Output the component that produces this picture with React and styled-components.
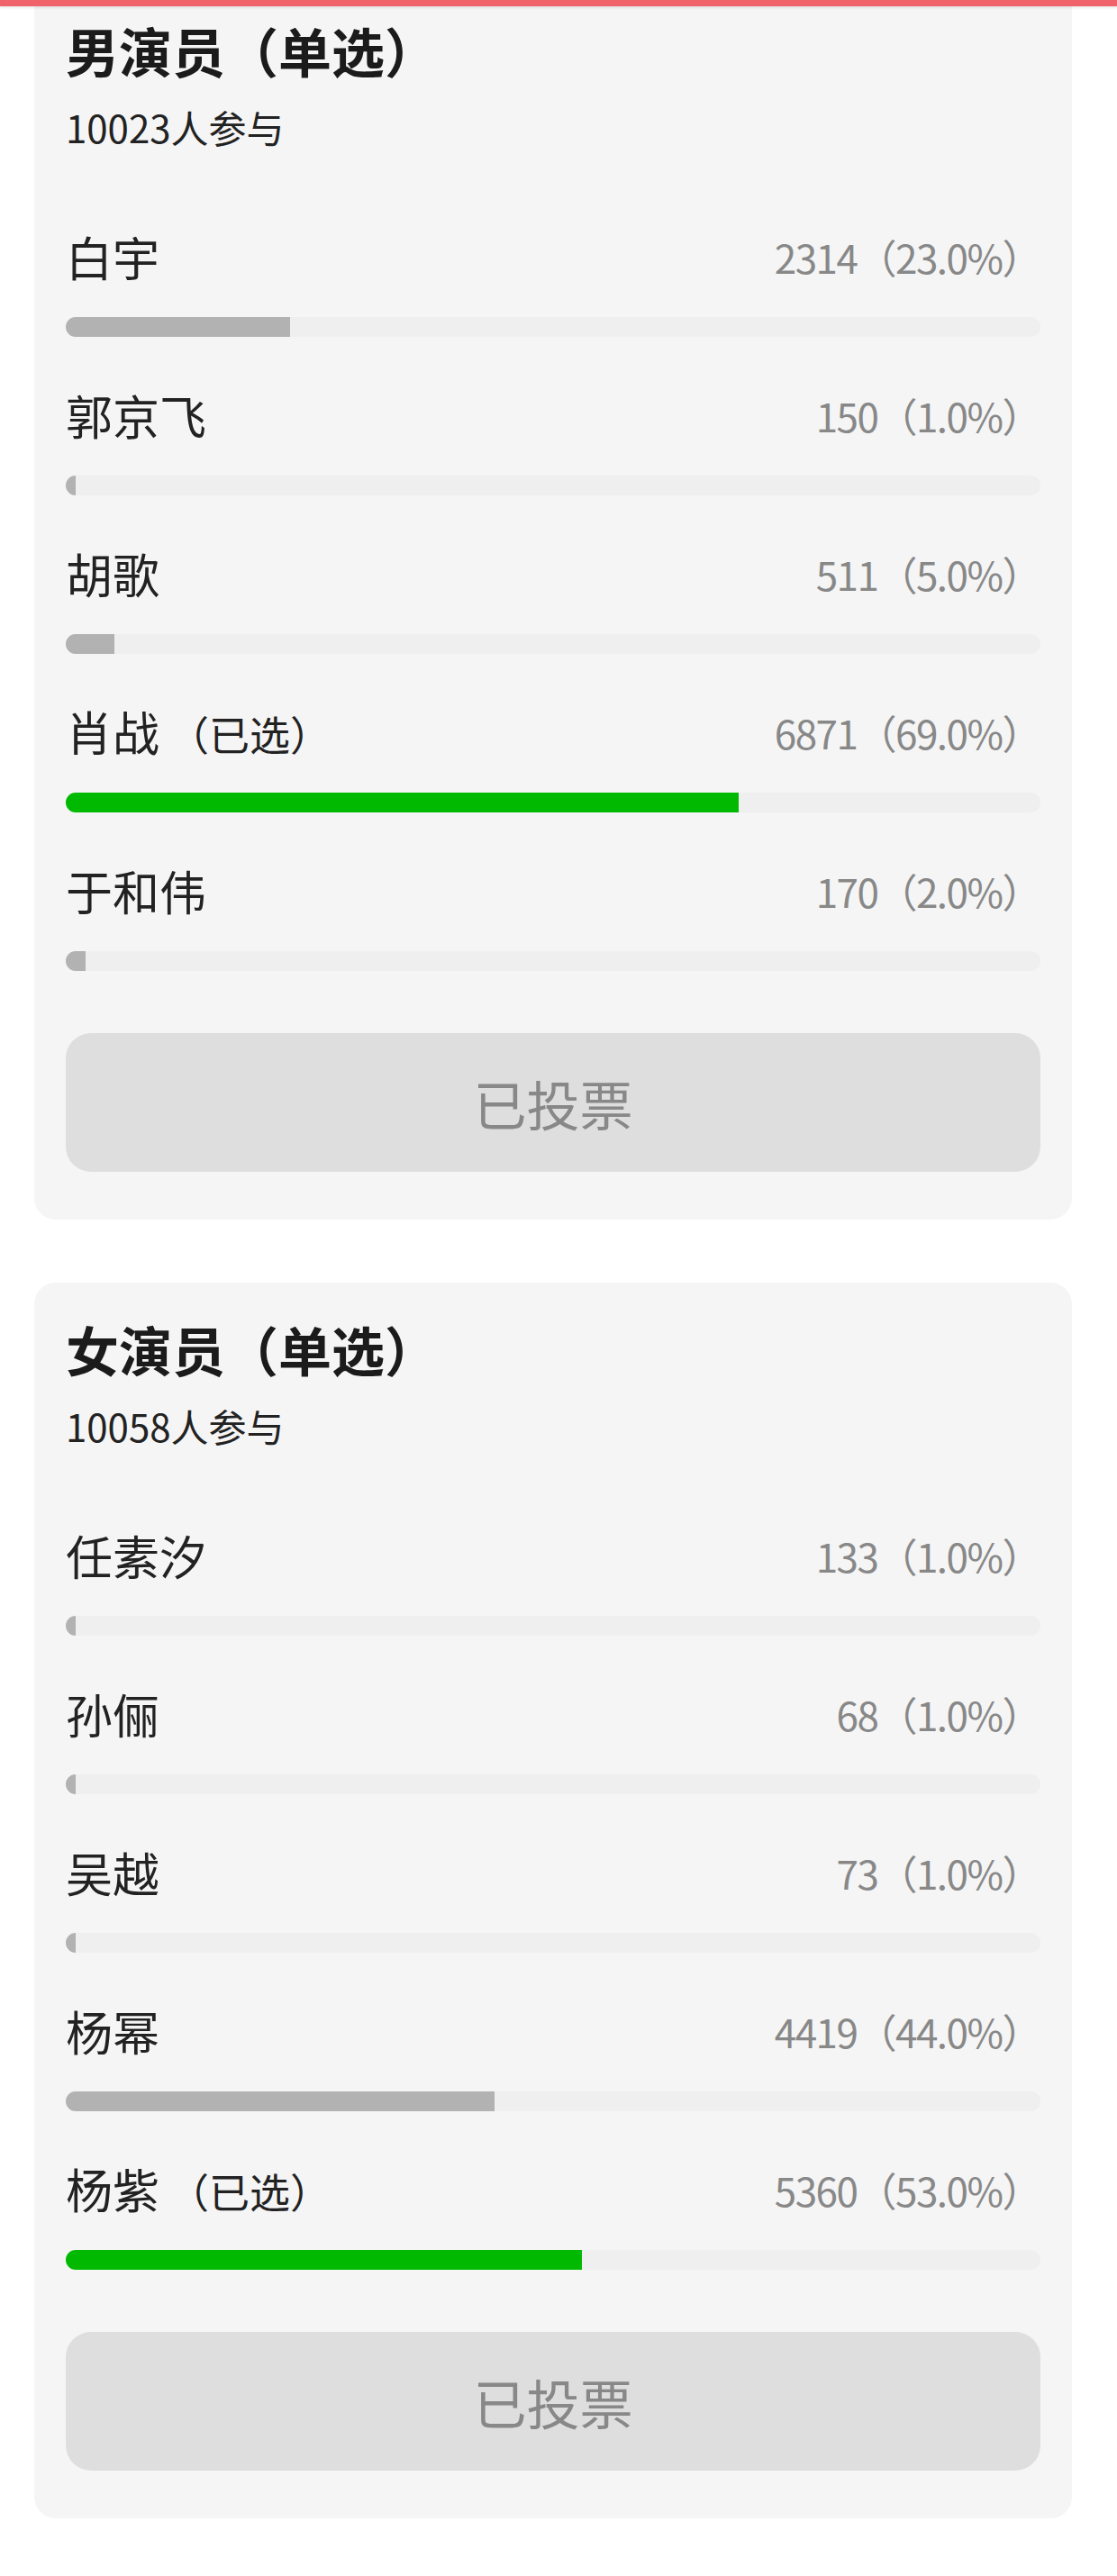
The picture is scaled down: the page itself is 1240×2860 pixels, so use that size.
import React from "react";
import styled, { createGlobalStyle } from "styled-components";

const polls = [
  {
    id: "male",
    title: "男演员（单选）",
    total: 10023,
    options: [
      { name: "白宇", votes: 2314, pct: 23 },
      { name: "郭京飞", votes: 150, pct: 1 },
      { name: "胡歌", votes: 511, pct: 5 },
      { name: "肖战", votes: 6871, pct: 69, selected: true },
      { name: "于和伟", votes: 170, pct: 2 },
    ],
  },
  {
    id: "female",
    title: "女演员（单选）",
    total: 10058,
    options: [
      { name: "任素汐", votes: 133, pct: 1 },
      { name: "孙俪", votes: 68, pct: 1 },
      { name: "吴越", votes: 73, pct: 1 },
      { name: "杨幂", votes: 4419, pct: 44 },
      { name: "杨紫", votes: 5360, pct: 53, selected: true },
    ],
  },
];

const GlobalStyle = createGlobalStyle`
  body {
    margin: 0;
    background: #fff;
    font-family: "Noto Sans CJK SC", "Noto Sans", sans-serif;
  }
`;

const TopBar = styled.div`
  position: fixed;
  top: 0;
  left: 0;
  right: 0;
  height: 7px;
  background: #f0636b;
  box-shadow: 0 2px 3px rgba(0, 0, 0, 0.08);
  z-index: 10;
`;

const Page = styled.main`
  margin-top: -18px;
  padding: 0 50px 60px 38px;
  display: flex;
  flex-direction: column;
  gap: 70px;
`;

const Card = styled.section`
  background: #f5f5f5;
  border-radius: 24px;
  padding: 44px 35px 53px 35px;
`;

const Title = styled.h2`
  margin: 0;
  font-size: 59px;
  font-weight: 700;
  line-height: 60px;
  color: #1b1b1b;
`;

const Count = styled.div`
  margin-top: 32px;
  font-size: 42px;
  line-height: 46px;
  color: #222;
`;

const Options = styled.div`
  margin-top: 93px;
  display: flex;
  flex-direction: column;
  gap: 59px;
`;

const OptionHead = styled.div`
  display: flex;
  justify-content: space-between;
  align-items: center;
  height: 56px;
`;

const Name = styled.span`
  font-size: 52px;
  line-height: 56px;
  color: #222;
`;

const Tag = styled.span`
  margin-left: 10px;
  font-size: 45px;
`;

const Stat = styled.span`
  font-size: 44px;
  color: #888;
  letter-spacing: -1.5px;
`;

const Track = styled.div`
  margin-top: 39px;
  height: 22px;
  border-radius: 11px;
  background: #efefef;
  overflow: hidden;
`;

const Fill = styled.div`
  height: 100%;
  background: ${(p) => (p.$selected ? "#00b900" : "#b2b2b2")};
`;

const VotedButton = styled.button`
  margin-top: 69px;
  width: 100%;
  height: 154px;
  border: none;
  border-radius: 28px;
  background: #dedede;
  color: #888;
  font-family: inherit;
  font-size: 59px;
`;

const Option = ({ option }) => (
  <div>
    <OptionHead>
      <Name>
        {option.name}
        {option.selected && <Tag>（已选）</Tag>}
      </Name>
      <Stat>
        {option.votes}（{option.pct.toFixed(1)}%）
      </Stat>
    </OptionHead>
    <Track>
      <Fill $selected={option.selected} style={{ width: `${option.pct}%` }} />
    </Track>
  </div>
);

const App = () => {
  return (
    <>
      <GlobalStyle />
      <TopBar />
      <Page>
        {polls.map((poll) => (
          <Card key={poll.id}>
            <Title>{poll.title}</Title>
            <Count>{poll.total}人参与</Count>
            <Options>
              {poll.options.map((o) => (
                <Option key={o.name} option={o} />
              ))}
            </Options>
            <VotedButton disabled>已投票</VotedButton>
          </Card>
        ))}
      </Page>
    </>
  );
};

export default App;
